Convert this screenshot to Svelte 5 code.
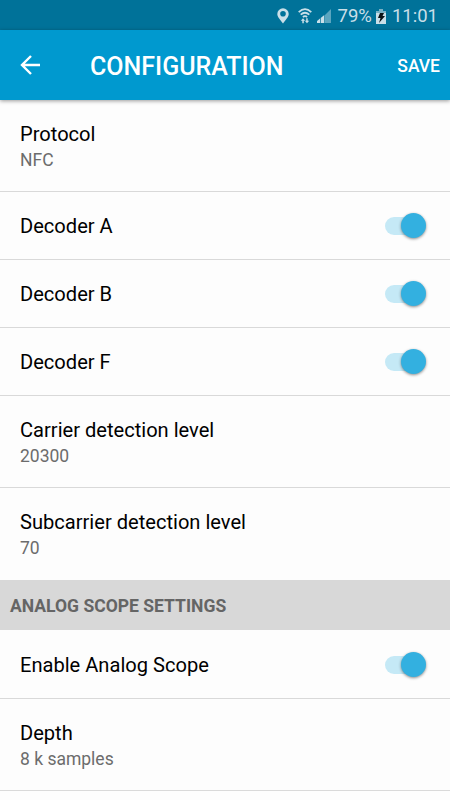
<script lang="ts">
	type Setting = { title: string; value?: string; on?: boolean };

	let general: Setting[] = $state([
		{ title: 'Protocol', value: 'NFC' },
		{ title: 'Decoder A', on: true },
		{ title: 'Decoder B', on: true },
		{ title: 'Decoder F', on: true },
		{ title: 'Carrier detection level', value: '20300' },
		{ title: 'Subcarrier detection level', value: '70' }
	]);

	let analog: Setting[] = $state([
		{ title: 'Enable Analog Scope', on: true },
		{ title: 'Depth', value: '8 k samples' }
	]);
</script>

{#snippet row(item: Setting)}
	<li class="row" class:toggle-row={item.on !== undefined}>
		<div class="labels">
			<span class="title">{item.title}</span>
			{#if item.value}
				<span class="value">{item.value}</span>
			{/if}
		</div>
		{#if item.on !== undefined}
			<button
				class="switch"
				class:on={item.on}
				role="switch"
				aria-checked={item.on}
				aria-label={item.title}
				onclick={() => (item.on = !item.on)}
			>
				<span class="track"></span>
				<span class="thumb"></span>
			</button>
		{/if}
	</li>
{/snippet}

<div class="screen">
	<div class="status-bar">
		<svg class="pin" width="12" height="16" viewBox="0 0 12 16">
			<path
				fill="currentColor"
				fill-rule="evenodd"
				d="M6 15.500C3.500 12 .3 9 .3 6a5.700 5.700 0 0 1 11.400 0C11.700 9 8.500 12 6 15.500zM6 3a2.800 2.800 0 1 0 0 5.600A2.800 2.800 0 0 0 6 3z"
			/>
		</svg>
		<svg class="wifi" width="14" height="16" viewBox="0 0 14 16">
			<g fill="none" stroke="currentColor" stroke-width="1.700">
				<path d="M.7 4.200Q7-2 13.300 4.200M2.700 6.700q4.300-3.900 8.600 0M4.900 9q2.100-1.800 4.200 0" />
			</g>
			<path
				fill="currentColor"
				d="M5 10.200l2.200 2.500H5.800v2.500H4.300v-2.500H2.800zM9 15.200l-2.200-2.500h1.400v-2.500h1.500v2.500h1.500z"
			/>
		</svg>
		<svg class="signal" width="16" height="16" viewBox="0 0 16 16">
			<path fill="#5ba5bf" d="M15 1v14H9V7z" />
			<path fill="currentColor" d="M1 15v-2l3-2.500V15zM4.700 15v-5L8.300 7v8z" />
		</svg>
		<span class="percent">79%</span>
		<svg class="battery" width="10" height="15" viewBox="0 0 10 15">
			<path fill="#79b1c5" d="M3 0h4v2h3v3H0V2h3z" />
			<path fill="currentColor" d="M0 4h10v11H0z" />
			<path fill="#0a1216" d="M4 4h4L6.500 7H9l-6 7 1.500-5H2z" />
		</svg>
		<span class="clock">11:01</span>
	</div>

	<header class="app-bar">
		<button class="back" aria-label="Back">
			<svg width="21" height="20" viewBox="0 0 21 20">
				<path
					fill="none"
					stroke="currentColor"
					stroke-width="2.400"
					d="M20 10H2M11 1L2 10l9 9"
				/>
			</svg>
		</button>
		<h1>CONFIGURATION</h1>
		<button class="save">SAVE</button>
	</header>

	<main>
		<ul class="general">
			{#each general as item}
				{@render row(item)}
			{/each}
		</ul>
		<h2>ANALOG SCOPE SETTINGS</h2>
		<ul>
			{#each analog as item}
				{@render row(item)}
			{/each}
		</ul>
	</main>
</div>

<style>
	:global(body) {
		margin: 0;
		background: #fdfdfd;
	}

	.screen {
		display: flex;
		flex-direction: column;
		height: 800px;
		overflow: hidden;
		background: #fdfdfd;
		color: #000;
		font-family: Roboto, sans-serif;
	}

	button {
		padding: 0;
		border: 0;
		background: none;
		color: inherit;
		font: inherit;
		cursor: pointer;
	}

	svg {
		display: block;
	}

	.status-bar {
		display: flex;
		flex: none;
		align-items: center;
		justify-content: flex-end;
		box-sizing: border-box;
		height: 30px;
		padding: 2px 12px 0 0;
		background: #007299;
		color: #c9dfe8;
		font-size: 18.500px;
	}

	.wifi {
		margin-left: 9px;
	}

	.signal {
		margin-left: 4px;
	}

	.percent {
		margin-left: 6px;
	}

	.battery {
		margin: 0 6px 0 4px;
	}

	.app-bar {
		z-index: 1;
		display: flex;
		flex: none;
		align-items: center;
		box-sizing: border-box;
		height: 70px;
		padding: 2px 10px 0 20px;
		background: #0099cf;
		box-shadow: 0 1px 4px rgba(0, 0, 0, 0.4);
		color: #fff;
	}

	.back {
		width: 70px;
	}

	.back svg {
		margin-top: -2px;
	}

	h1 {
		flex: 1;
		margin: 0;
		font-size: 25px;
		font-weight: 500;
	}

	.save {
		font-size: 17.500px;
		font-weight: 500;
	}

	ul {
		margin: 0;
		padding: 0;
		list-style: none;
	}

	.row {
		display: flex;
		align-items: center;
		justify-content: space-between;
		box-sizing: border-box;
		height: 92px;
		padding: 0 24px 0 20px;
		border-bottom: 1px solid #d9d9d9;
	}

	.toggle-row {
		height: 68px;
	}

	.general .row:last-child {
		border-bottom-color: transparent;
	}

	.labels {
		display: flex;
		flex-direction: column;
		padding-top: 2px;
	}

	.title {
		font-size: 20.100px;
		line-height: 27px;
	}

	.value {
		color: #6c6c6c;
		font-size: 17.500px;
		line-height: 24px;
	}

	.switch {
		display: grid;
		align-items: center;
		width: 41px;
		height: 26px;
	}

	.track,
	.thumb {
		grid-area: 1 / 1;
	}

	.track {
		width: 36px;
		height: 18px;
		border-radius: 9px;
		background: #d0d0d0;
	}

	.thumb {
		width: 25px;
		height: 25px;
		border-radius: 50%;
		background: #fafafa;
		box-shadow: 0 1px 3px rgba(0, 0, 0, 0.45);
	}

	.on .track {
		background: #c5e9f6;
	}

	.on .thumb {
		justify-self: end;
		background: #33b0e0;
	}

	h2 {
		height: 50px;
		margin: 0 0 1px;
		padding-left: 10px;
		background: #d8d8d8;
		color: #656565;
		font-size: 17.550px;
		font-weight: 700;
		line-height: 52px;
	}
</style>
